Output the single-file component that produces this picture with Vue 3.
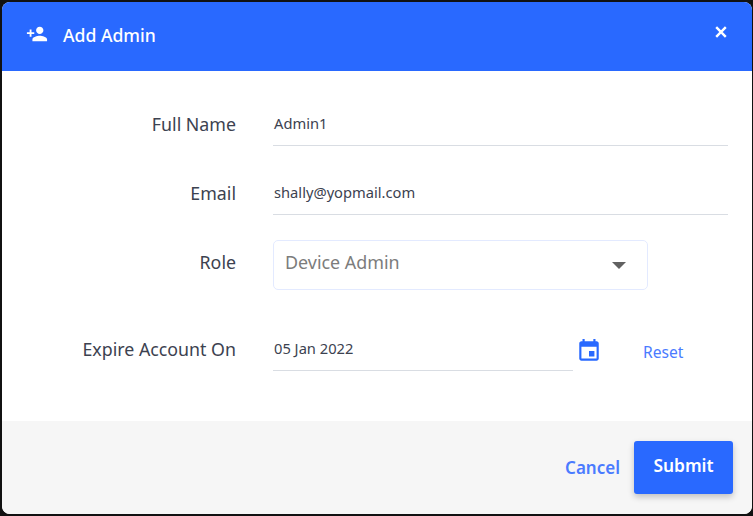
<script setup>
const title = 'Add Admin'
</script>

<template>
  <div class="screen">
    <div class="modal">
      <header class="head">
        <svg class="add-icon" viewBox="0 0 24 24" width="24" height="24"><path fill="#fff" d="M15 12c2.21 0 4-1.79 4-4s-1.79-4-4-4-4 1.79-4 4 1.79 4 4 4zm-9-2V7H4v3H1v2h3v3h2v-3h3v-2H6zm9 4c-2.67 0-8 1.34-8 4v2h16v-2c0-2.66-5.33-4-8-4z"/></svg>
        <h1 class="title">{{ title }}</h1>
        <svg class="close" viewBox="0 0 12 12" width="12" height="12"><path d="M1.2 1.2l9.6 9.6M10.8 1.2l-9.6 9.6" stroke="#fff" stroke-width="2.4" fill="none"/></svg>
      </header>

      <div class="body">
        <div class="row r-name">
          <label class="label">Full Name</label>
          <div class="field long">Admin1</div>
        </div>
        <div class="row r-email">
          <label class="label">Email</label>
          <div class="field long">shally@yopmail.com</div>
        </div>
        <div class="row r-role">
          <label class="label role-label">Role</label>
          <div class="select">
            <span class="select-text">Device Admin</span>
            <span class="caret"></span>
          </div>
        </div>
        <div class="row r-date">
          <label class="label">Expire Account On</label>
          <div class="field date">05 Jan 2022</div>
          <svg class="cal" viewBox="0 0 24 24" width="26" height="26"><path fill="#2969ff" d="M17 12h-5v5h5v-5zM16 1v2H8V1H6v2H5c-1.11 0-1.99.9-1.99 2L3 19c0 1.1.89 2 2 2h14c1.1 0 2-.9 2-2V5c0-1.1-.9-2-2-2h-1V1h-2zm3 18H5V8h14v11z"/></svg>
          <a class="reset">Reset</a>
        </div>
      </div>

      <footer class="foot">
        <a class="cancel">Cancel</a>
        <button class="submit">Submit</button>
      </footer>
    </div>
  </div>
</template>

<style>
html, body { margin: 0; background: #1a1a1a; }
</style>

<style scoped>
.screen {
  width: 753px;
  height: 516px;
  box-sizing: border-box;
  padding: 2px 1px 2px 2px;
  background: #111;
  font-family: "Noto Sans", "Open Sans", sans-serif;
  overflow: hidden;
}
.modal {
  height: 512px;
  display: flex;
  flex-direction: column;
  border-radius: 8px;
  overflow: hidden;
  background: #fff;
}
.head {
  height: 69px;
  flex: none;
  display: flex;
  align-items: center;
  background: #2969ff;
  color: #fff;
  padding: 0 25px 4px 24px;
  box-sizing: border-box;
}
.add-icon { margin-right: 15px; width: 22px; height: 22px; margin-top: -2px; }
.title { margin: 0; font-size: 17.6px; font-weight: 500; flex: 1; }
.close { margin-top: -6px; }
.body {
  flex: 1;
  padding: 31px 24px 0 0;
}
.row {
  display: grid;
  grid-template-columns: 234px 1fr;
  column-gap: 37px;
  align-items: center;
}
.label {
  text-align: right;
  font-size: 17.8px;
  color: #3c4250;
}
.role-label { padding-bottom: 6px; }
.field {
  font-size: 14.7px;
  color: #3c4250;
  border-bottom: 1px solid #d9dde3;
  box-sizing: border-box;
  height: 44px;
  line-height: 42px;
  padding-left: 1px;
}
.r-email { margin-top: 25px; }
.r-role { margin-top: 25px; }
.select {
  width: 375px;
  height: 50px;
  box-sizing: border-box;
  border: 1px solid #e3eaff;
  border-radius: 5px;
  padding: 0 21px 0 11px;
  display: flex;
  align-items: center;
  justify-content: space-between;
  font-size: 17.9px;
  color: #7c7c7c;
}
.select-text { padding-bottom: 6px; }
.caret {
  width: 0;
  height: 0;
  border-left: 7px solid transparent;
  border-right: 7px solid transparent;
  border-top: 7px solid #616161;
  margin-top: 0;
}
.r-date {
  margin-top: 37px;
  grid-template-columns: 234px 340px 29px 1fr;
  column-gap: 0;
}
.date { margin-left: 37px; width: 300px; height: 44px; padding-left: 1px; }
.cal { margin-left: 0; margin-top: 3px; }
.reset { margin-left: 38px; font-size: 15.6px; color: #4a7bff; margin-top: 6px; }
.foot {
  height: 93px;
  flex: none;
  background: #f6f6f6;
  display: flex;
  align-items: center;
  justify-content: flex-end;
  padding: 0 19px 0 0;
  box-sizing: border-box;
}
.cancel { font-size: 17px; font-weight: 600; color: #4a7bff; margin-right: 14px; }
.submit {
  width: 99px;
  height: 53px;
  border: 0;
  border-radius: 3px;
  background: #2969ff;
  color: #fff;
  font: 600 17.4px "Noto Sans", sans-serif;
  box-shadow: 0 3px 6px rgba(0,0,0,.22);
  padding: 0 0 6px;
}
</style>
